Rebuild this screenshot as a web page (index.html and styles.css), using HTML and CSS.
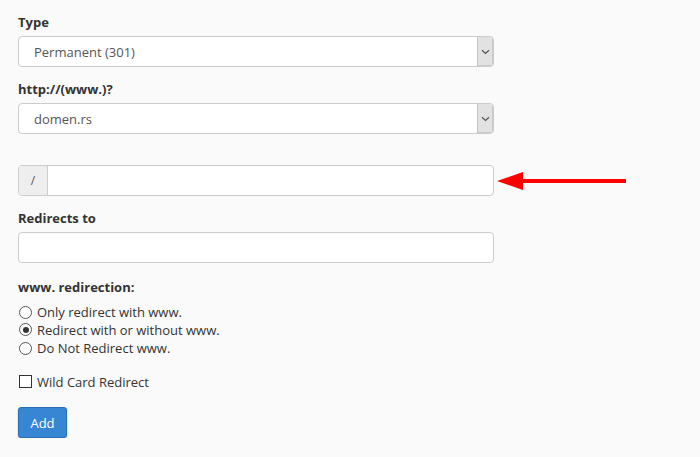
FILE: index.html
```html
<!DOCTYPE html>
<html>
<head>
<meta charset="utf-8">
<link rel="stylesheet" href="styles.css">
</head>
<body>
<div class="form">
  <div class="field">
    <label class="lbl">Type</label>
    <div class="select">
      <span class="sel-text">Permanent (301)</span>
      <span class="sel-btn"><svg width="9" height="6" viewBox="0 0 9 6"><path d="M1 1.2 L4.5 4.5 L8 1.2" fill="none" stroke="#555" stroke-width="1.2"/></svg></span>
    </div>
  </div>
  <div class="field">
    <label class="lbl">http://(www.)?</label>
    <div class="select">
      <span class="sel-text">domen.rs</span>
      <span class="sel-btn"><svg width="9" height="6" viewBox="0 0 9 6"><path d="M1 1.2 L4.5 4.5 L8 1.2" fill="none" stroke="#555" stroke-width="1.2"/></svg></span>
    </div>
  </div>
  <div class="field path-field">
    <div class="input-group">
      <span class="addon">/</span>
      <span class="ig-input"></span>
    </div>
    <svg class="arrow" width="132" height="20" viewBox="0 0 132 20"><polygon points="0,10 26,1 26,19" fill="#ff0000"/><rect x="24" y="8" width="105" height="4" fill="#ff0000"/></svg>
  </div>
  <div class="field">
    <label class="lbl">Redirects to</label>
    <div class="input"></div>
  </div>
  <div class="field www">
    <label class="lbl">www. redirection:</label>
    <div class="radios">
      <div class="opt"><span class="radio"></span>Only redirect with www.</div>
      <div class="opt"><span class="radio on"></span>Redirect with or without www.</div>
      <div class="opt"><span class="radio"></span>Do Not Redirect www.</div>
    </div>
  </div>
  <div class="opt check-row"><span class="checkbox"></span>Wild Card Redirect</div>
  <button class="btn">Add</button>
</div>
</body>
</html>
```
FILE: styles.css
```css
html, body {
  margin: 0;
  padding: 0;
  background: #fafafa;
  font-family: "Open Sans", "Liberation Sans", sans-serif;
  color: #333;
}
.form {
  padding: 13px 0 0 18px;
  width: 476px;
}
.field {
  margin-bottom: 13px;
}
.lbl {
  display: block;
  font-weight: 700;
  font-size: 13px;
  line-height: 18px;
  margin-bottom: 5px;
  color: #333;
}
.select {
  height: 31px;
  box-sizing: border-box;
  border: 1px solid #ccc;
  border-radius: 4px;
  background: #fff;
  display: flex;
  align-items: stretch;
  overflow: hidden;
}
.sel-text {
  flex: 1;
  display: flex;
  align-items: center;
  padding-left: 15px;
  font-size: 13px;
  color: #555;
}
.sel-btn {
  width: 15px;
  background: #e2e2e2;
  border-left: 1px solid #c4c4c4;
  box-shadow: inset -1px -1px 0 #c9c9c9;
  display: flex;
  align-items: center;
  justify-content: center;
}
.path-field {
  margin-top: 31px;
  position: relative;
}
.input-group {
  display: flex;
  height: 31px;
  box-sizing: border-box;
  border: 1px solid #ccc;
  border-radius: 4px;
  background: #fff;
  overflow: hidden;
}
.addon {
  width: 28px;
  background: #eee;
  border-right: 1px solid #ccc;
  display: flex;
  align-items: center;
  justify-content: center;
  font-size: 12px;
  color: #555;
}
.ig-input { flex: 1; }
.arrow {
  position: absolute;
  left: 479px;
  top: 6px;
}
.input {
  height: 31px;
  box-sizing: border-box;
  border: 1px solid #ccc;
  border-radius: 4px;
  background: #fff;
}
.www {
  margin-top: 15px;
  margin-bottom: 0;
}
.www .lbl { margin-bottom: 7px; }
.radios .opt:first-child { margin-top: 1px; margin-bottom: -1px; }
.opt {
  display: flex;
  align-items: center;
  font-size: 13px;
  line-height: 18.5px;
  color: #333;
}
.radio {
  width: 11px;
  height: 11px;
  border: 1px solid #555;
  border-radius: 50%;
  background: #fff;
  margin: 0 5px 0 1px;
  box-sizing: content-box;
  position: relative;
}
.radio.on::after {
  content: "";
  position: absolute;
  left: 2.5px;
  top: 2.5px;
  width: 6px;
  height: 6px;
  border-radius: 50%;
  background: #333;
}
.check-row {
  margin-top: 15px;
}
.checkbox {
  width: 11px;
  height: 11px;
  border: 1px solid #333;
  background: #fff;
  margin: 0 5px 0 1px;
}
.btn {
  margin-top: 16px;
  width: 49px;
  height: 31px;
  background: #3686d4;
  border: 1px solid #2b6fb3;
  border-radius: 3px;
  color: #fff;
  font-family: "Open Sans", "Liberation Sans", sans-serif;
  font-size: 13px;
  padding: 0;
  box-shadow: 0 1px 2px rgba(0,0,0,0.25);
}
```
